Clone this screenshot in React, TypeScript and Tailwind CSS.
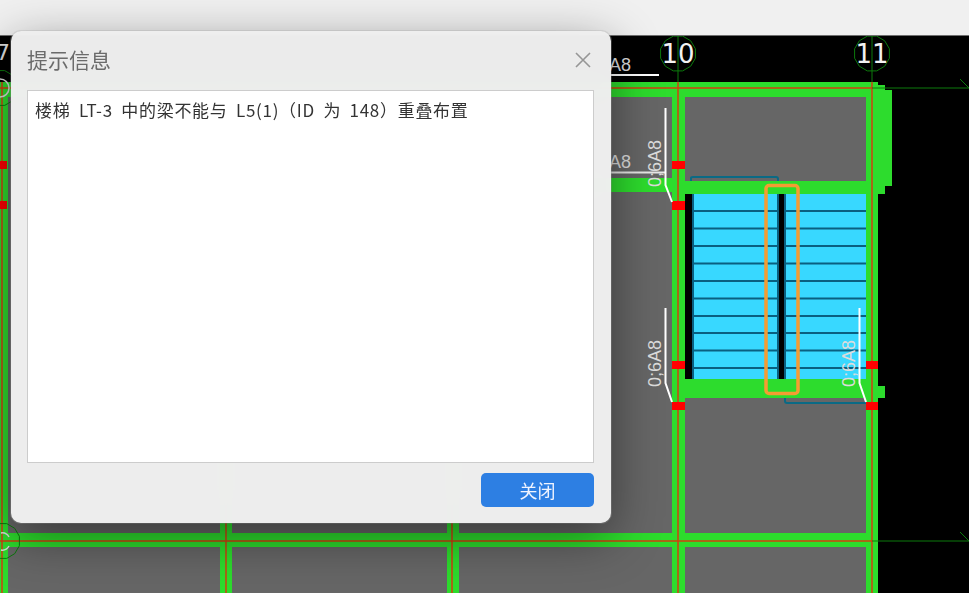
const GREEN = '#2ddc2d';
const WIRE = '#d2400f';
const DARK_GREEN = '#0c7a0c';

const steps = [211, 228.5, 246, 263.5, 281, 298.5, 316, 333, 350.5, 368];

const panels = [
  [8, 97, 212, 436],
  [232, 97, 215, 436],
  [459, 97, 213, 81],
  [459, 192, 213, 341],
  [685, 97, 181, 84],
  [685, 398, 181, 135],
  [8, 547, 212, 46],
  [232, 547, 215, 46],
  [459, 547, 213, 46],
  [685, 547, 181, 46],
];

const redMarks = [
  [0, 161, 7, 8],
  [0, 201, 7, 8],
  [672, 161, 13, 8],
  [672, 201, 13, 9],
  [672, 361, 13, 8],
  [672, 402, 13, 8],
  [866, 361, 12, 8],
  [866, 402, 12, 8],
];

const bubblePoints = (cx: number, cy: number, r: number) =>
  Array.from({ length: 12 }, (_, i) => {
    const a = (Math.PI / 6) * i + Math.PI / 12;
    return `${(cx + r * Math.cos(a)).toFixed(1)},${(cy + r * Math.sin(a)).toFixed(1)}`;
  }).join(' ');

const AxisBubble = ({ x, label }: { x: number; label: string }) => (
  <g>
    <line x1={x} y1={36} x2={x} y2={82} stroke={DARK_GREEN} />
    <polygon points={bubblePoints(x, 53.5, 18)} fill="none" stroke={DARK_GREEN} />
    <text x={x} y={63} textAnchor="middle" fontSize={26} fill="#f2f2f2" fontFamily="'DejaVu Sans', sans-serif">
      {label}
    </text>
  </g>
);

const RebarLabel = ({ x, y, label }: { x: number; y: number; label: string }) => (
  <text
    transform={`translate(${x} ${y}) rotate(-90)`}
    fontSize={18}
    fill="#dcdcdc"
    fontFamily="'Liberation Sans', sans-serif"
  >
    {label}
  </text>
);

const Drawing = () => (
  <svg viewBox="0 36 969 557" className="block w-full h-full">
    <rect x={0} y={36} width={969} height={557} fill="#000000" />

    {/* beams */}
    <rect x={0} y={82} width={878} height={511} fill={GREEN} />
    <path d="M872 85h13v5h7v96h-7v8h-7v-109z" fill={GREEN} />
    <path d="M878 386h7v12h-7z" fill={GREEN} />
    {panels.map(([x, y, w, h]) => (
      <rect key={`${x}-${y}`} x={x} y={y} width={w} height={h} fill="#666666" />
    ))}

    {/* stair */}
    <rect x={686} y={194} width={180} height={185} fill="#38d8ff" />
    <rect x={685} y={194} width={7} height={185} fill="#000000" />
    <rect x={692} y={194} width={2} height={185} fill="#0a5f80" />
    {steps.map((y) => (
      <rect key={y} x={692} y={y - 1} width={174} height={2} fill="#0a5f80" />
    ))}
    <rect x={777} y={194} width={9} height={185} fill="#0a5f80" />
    <rect x={779} y={194} width={5} height={185} fill="#000000" />
    <path d="M691 181v-3q0-1 2-1h83q2 0 2 2v2" fill="none" stroke="#0a6a85" strokeWidth={2} />
    <path d="M785 398v3q0 2 2 2h79" fill="none" stroke="#0a6a85" strokeWidth={2} />
    <rect x={766} y={185.5} width={32} height={208} rx={3} fill="none" stroke="#f59c32" strokeWidth={3.5} />

    {/* grid lines */}
    {[2, 226, 452, 678, 872].map((x) => (
      <line key={x} x1={x} y1={82} x2={x} y2={593} stroke={WIRE} strokeWidth={1.5} />
    ))}
    {[88, 541].map((y) => (
      <g key={y}>
        <line x1={0} y1={y} x2={872} y2={y} stroke={WIRE} strokeWidth={1.5} />
        <line x1={872} y1={y} x2={969} y2={y} stroke={DARK_GREEN} strokeWidth={1.2} />
        <line x1={960} y1={y - 9} x2={969} y2={y} stroke={DARK_GREEN} />
      </g>
    ))}
    {redMarks.map(([x, y, w, h]) => (
      <rect key={`${x}-${y}`} x={x} y={y} width={w} height={h} fill="#ff0000" />
    ))}

    {/* axis bubbles */}
    <AxisBubble x={678} label="10" />
    <AxisBubble x={872} label="11" />
    <text x={-4} y={60} fontSize={22} fill="#dddddd" fontFamily="'DejaVu Sans', sans-serif">7</text>
    <polygon points={bubblePoints(0, 88, 18)} fill="none" stroke={DARK_GREEN} />
    <circle cx={0} cy={88} r={9} fill="none" stroke="#dddddd" strokeWidth={1.5} />
    <polygon points={bubblePoints(2, 541, 18)} fill="none" stroke={DARK_GREEN} />
    <path d="M1 533a8 9 0 0 1 8 4M9 546a8 9 0 0 1-8 4" fill="none" stroke="#dddddd" strokeWidth={1.5} />

    {/* rebar labels */}
    <text x={609} y={71} fontSize={18} fill="#dcdcdc" fontFamily="'Liberation Sans', sans-serif">A8</text>
    <line x1={610} y1={75} x2={659} y2={75} stroke="#ffffff" strokeWidth={2} />
    <text x={609} y={168} fontSize={18} fill="#dcdcdc" fontFamily="'Liberation Sans', sans-serif">A8</text>
    <line x1={610} y1={172.5} x2={666} y2={172.5} stroke="#e8e8e8" strokeWidth={2} />
    <RebarLabel x={661} y={187} label="0;6A8" />
    <path d="M665.500 108v77l6.500 17" fill="none" stroke="#ffffff" strokeWidth={2} />
    <RebarLabel x={661} y={387} label="0;6A8" />
    <path d="M665.500 308v75l6.500 19" fill="none" stroke="#ffffff" strokeWidth={2} />
    <RebarLabel x={855} y={387} label="0;6A8" />
    <path d="M859.500 308v75l6.500 19" fill="none" stroke="#ffffff" strokeWidth={2} />
  </svg>
);

const MessageDialog = () => (
  <div className="absolute left-[11px] top-[-5px] flex h-[492px] w-[600px] flex-col rounded-[10px] bg-[#f0f0f0]/98 pb-4 pl-4 pr-[17px] shadow-[0_14px_50px_rgba(0,0,0,0.45),0_0_0_1px_rgba(190,190,190,0.3)] backdrop-blur-lg">
    <div className="flex h-[59px] shrink-0 items-center justify-between pb-[2px]">
      <span className="text-[21px] leading-none text-[#6b6b6b]">提示信息</span>
      <svg width="18" height="18" viewBox="0 0 18 18" className="mr-[2px]">
        <path d="M2 2l14 14M16 2L2 16" stroke="#969696" strokeWidth="1.6" fill="none" />
      </svg>
    </div>
    <div className="flex-1 border border-[#cccccc] bg-white px-[7px] py-[7px] text-[17px] leading-[24px] tracking-[0.7px] text-[#333333] [word-spacing:4px]">
      楼梯 LT-3 中的梁不能与 L5(1)（ID 为 148）重叠布置
    </div>
    <div className="mt-[10px] flex justify-end">
      <button className="h-[34px] w-[113px] rounded-[5px] bg-[#2d7fe3] text-[18px] leading-none text-[#f0f4ff]">关闭</button>
    </div>
  </div>
);

export default function App() {
  return (
    <div className="flex h-[593px] w-[969px] flex-col overflow-hidden bg-[#f0f0f0] font-['Noto_Sans_CJK_SC','Noto_Sans',sans-serif]">
      <div className="h-[36px] shrink-0 border-b border-[#6e6e6e] bg-[#f0f0f0]" />
      <div className="relative flex-1">
        <Drawing />
        <MessageDialog />
      </div>
    </div>
  );
}
